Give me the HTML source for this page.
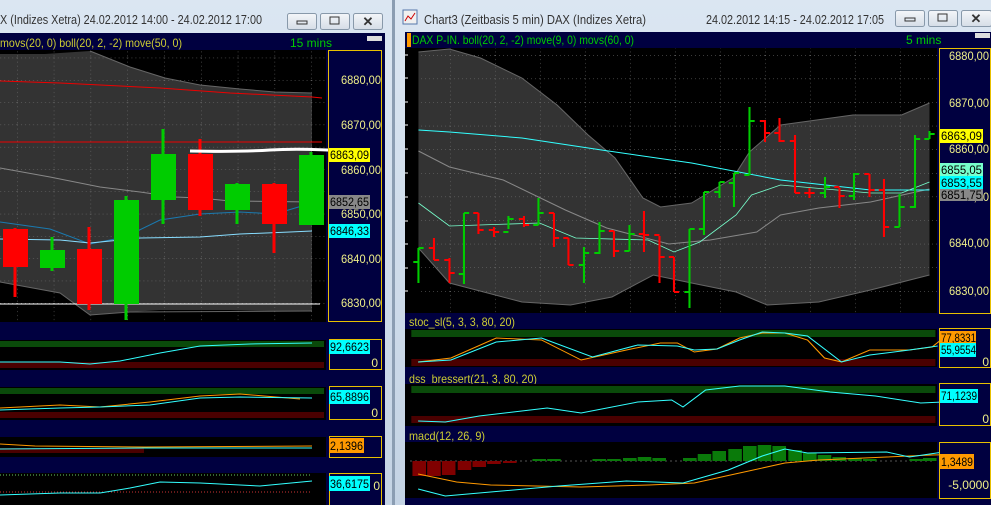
<!DOCTYPE html>
<html><head><meta charset="utf-8"><style>
html,body{margin:0;padding:0;width:991px;height:505px;overflow:hidden;background:#c8d6e5}
svg{display:block;font-family:"Liberation Sans",sans-serif}
</style></head><body>
<svg width="991" height="505" viewBox="0 0 991 505" xmlns="http://www.w3.org/2000/svg">
<defs>
<linearGradient id="tb" x1="0" y1="0" x2="0" y2="1"><stop offset="0" stop-color="#dbe6f2"/><stop offset="1" stop-color="#c4d3e4"/></linearGradient>
<linearGradient id="bt" x1="0" y1="0" x2="0" y2="1"><stop offset="0" stop-color="#f4f6f9"/><stop offset="1" stop-color="#d5dde7"/></linearGradient>
<pattern id="gridL" width="36.8" height="22.3" patternUnits="userSpaceOnUse" x="17" y="80"><path d="M0 0V22.3M0 0H36.8" stroke="#777" stroke-dasharray="1,3" fill="none"/></pattern>
<pattern id="gridR" width="45" height="23.6" patternUnits="userSpaceOnUse" x="450" y="55"><path d="M0 0V23.6M0 0H45" stroke="#777" stroke-dasharray="1,3" fill="none"/></pattern>
</defs>
<rect x="0" y="0" width="392" height="505" fill="url(#tb)"/>
<rect x="392" y="0" width="3" height="505" fill="#8b9db2"/>
<rect x="395" y="0" width="596" height="505" fill="url(#tb)"/>
<text x="0" y="24" font-size="12.5" fill="#333" textLength="262" lengthAdjust="spacingAndGlyphs">X (Indizes Xetra) 24.02.2012 14:00 - 24.02.2012 17:00</text>
<g stroke="#8899aa" fill="url(#bt)"><rect x="287.5" y="13.5" width="29" height="16" rx="2"/><rect x="320.5" y="13.5" width="29" height="16" rx="2"/><rect x="353.5" y="13.5" width="29" height="16" rx="2"/></g>
<rect x="297" y="21" width="10" height="3" fill="none" stroke="#333"/><rect x="330" y="17" width="9" height="7" fill="none" stroke="#333"/>
<text x="368" y="26" font-size="13" fill="#333" text-anchor="middle" font-weight="bold">✕</text>
<rect x="403" y="10" width="14" height="14" fill="#f0f0f0" stroke="#5577aa"/><path d="M405 21l3-5 3 3 4-6" stroke="#c00" fill="none"/>
<text x="424" y="24" font-size="12.5" fill="#333" textLength="222" lengthAdjust="spacingAndGlyphs">Chart3 (Zeitbasis 5 min)  DAX (Indizes Xetra)</text>
<text x="706" y="24" font-size="12.5" fill="#333" textLength="178" lengthAdjust="spacingAndGlyphs">24.02.2012 14:15 - 24.02.2012 17:05</text>
<g stroke="#8899aa" fill="url(#bt)"><rect x="895.5" y="10.5" width="29" height="16" rx="2"/><rect x="928.5" y="10.5" width="29" height="16" rx="2"/><rect x="961.5" y="10.5" width="30" height="16" rx="2"/></g>
<rect x="905" y="18" width="10" height="3" fill="none" stroke="#333"/><rect x="938" y="14" width="9" height="7" fill="none" stroke="#333"/>
<text x="976" y="23" font-size="13" fill="#333" text-anchor="middle" font-weight="bold">✕</text>

<!-- LEFT CHART -->
<rect x="0" y="33" width="385" height="472" fill="#000040"/>
<text x="0" y="47" font-size="12" fill="#cccc33" textLength="182" lengthAdjust="spacingAndGlyphs">movs(20, 0) boll(20, 2, -2) move(50, 0)</text>
<text x="290" y="47" font-size="12" fill="#00cc00">15 mins</text>
<rect x="367" y="36" width="15" height="5" fill="#ddd"/>
<rect x="0" y="50" width="326" height="272" fill="#000"/>
<polygon points="0,54 45,54 90,51 130,67 165,78 200,85 240,89 275,92 312,93 312,311 270,311 230,310 160,310 130,312 90,315 60,293 0,282" fill="#333"/>
<polyline points="90,51 130,67 165,78 200,85 240,89 275,92 312,93" stroke="#666" fill="none"/>
<polyline points="0,282 60,293 90,315 130,312 312,311" stroke="#666" fill="none"/>
<rect x="0" y="50" width="326" height="272" fill="url(#gridL)"/>
<polyline points="0,81 60,83 160,88 230,93 312,97 322,98" stroke="#e00" fill="none"/>
<line x1="0" y1="142" x2="322" y2="142" stroke="#e00"/>
<line x1="0" y1="304" x2="320" y2="304" stroke="#fff"/>
<polyline points="0,168 50,177 100,187 140,192 175,197 200,198 230,201 312,202" stroke="#888" fill="none"/>
<polyline points="0,222 50,229 90,244 125,237 160,220 200,214 240,212 275,214 312,203" stroke="#1a7ab0" fill="none"/>
<polyline points="0,239 60,240 90,243 140,238 200,237 240,234 290,232 312,231" stroke="#88ddff" fill="none"/>
<path d="M52 237V271M126 196V320M163 129V224M237 183V224M311 152V225" stroke="#0c0" stroke-width="3"/>
<path d="M15 228V297M89 227V310M200 139V216M274 183V253" stroke="#f00" stroke-width="3"/>
<g><rect x="3" y="229" width="25" height="38" fill="#f00"/><rect x="40" y="250" width="25" height="18" fill="#0c0"/><rect x="77" y="249" width="25" height="55" fill="#f00"/><rect x="114" y="200" width="25" height="104" fill="#0c0"/><rect x="151" y="154" width="25" height="46" fill="#0c0"/><rect x="188" y="154" width="25" height="56" fill="#f00"/><rect x="225" y="184" width="25" height="26" fill="#0c0"/><rect x="262" y="184" width="25" height="40" fill="#f00"/><rect x="299" y="155" width="25" height="70" fill="#0c0"/></g>
<path d="M190 151Q240 152 270 150T348 151" stroke="#fff" stroke-width="3" fill="none"/>
<rect x="328.5" y="50.5" width="53" height="271" fill="#000040" stroke="#e8c000"/>
<g font-size="12" fill="#eeee88"><text x="341" y="84" textLength="40" lengthAdjust="spacingAndGlyphs">6880,00</text><text x="341" y="129" textLength="40" lengthAdjust="spacingAndGlyphs">6870,00</text><text x="341" y="174" textLength="40" lengthAdjust="spacingAndGlyphs">6860,00</text><text x="341" y="218" textLength="40" lengthAdjust="spacingAndGlyphs">6850,00</text><text x="341" y="263" textLength="40" lengthAdjust="spacingAndGlyphs">6840,00</text><text x="341" y="307" textLength="40" lengthAdjust="spacingAndGlyphs">6830,00</text></g>
<g font-size="12" fill="#000">
<rect x="329" y="148" width="41" height="14" fill="#ffff00"/><text x="330" y="159" textLength="39" lengthAdjust="spacingAndGlyphs">6863,09</text>
<rect x="329" y="195" width="41" height="14" fill="#888"/><text x="330" y="206" textLength="39" lengthAdjust="spacingAndGlyphs">6852,65</text>
<rect x="329" y="224" width="41" height="14" fill="#00ffff"/><text x="330" y="235" textLength="39" lengthAdjust="spacingAndGlyphs">6846,33</text>
</g>
<rect x="0" y="340" width="326" height="30" fill="#000"/>
<rect x="0" y="341" width="324" height="6" fill="#0a4a0a"/><rect x="0" y="362" width="324" height="6" fill="#4a0000"/>
<polyline points="0,362 60,362 90,364 120,361 160,353 200,346 250,344 312,343" stroke="#33ffff" fill="none"/>
<rect x="329.5" y="339.5" width="52" height="30" fill="#000040" stroke="#e8c000"/>
<rect x="329" y="340" width="41" height="14" fill="#00ffff"/><text x="330" y="351" font-size="12" fill="#000" textLength="39" lengthAdjust="spacingAndGlyphs">92,6623</text><text x="378" y="367" font-size="12" fill="#eeee88" text-anchor="end">0</text>
<rect x="0" y="387" width="326" height="33" fill="#000"/>
<rect x="0" y="388" width="324" height="6" fill="#0a4a0a"/><rect x="0" y="412" width="324" height="6" fill="#4a0000"/>
<polyline points="0,408 60,405 100,407 150,402 200,396 240,394 300,399" stroke="#ff9900" fill="none"/>
<polyline points="0,410 60,408 100,407 150,405 200,398 240,397 312,398" stroke="#33ffff" fill="none"/>
<rect x="329.5" y="386.5" width="52" height="33" fill="#000040" stroke="#e8c000"/>
<rect x="329" y="390" width="41" height="14" fill="#00ffff"/><text x="330" y="401" font-size="12" fill="#000" textLength="39" lengthAdjust="spacingAndGlyphs">65,8896</text><text x="378" y="417" font-size="12" fill="#eeee88" text-anchor="end">0</text>
<rect x="0" y="437" width="326" height="20" fill="#000"/>
<rect x="0" y="448" width="144" height="5" fill="#4a0000"/>
<polyline points="0,444 35,446 145,447 312,446" stroke="#ff9900" fill="none"/>
<polyline points="0,449 145,448 312,448" stroke="#33ffff" fill="none"/>
<rect x="329.5" y="436.5" width="52" height="21" fill="#000040" stroke="#e8c000"/>
<rect x="329" y="438" width="35" height="15" fill="#ff9900"/><text x="330" y="450" font-size="12" fill="#000" textLength="33" lengthAdjust="spacingAndGlyphs">2,1396</text>
<rect x="0" y="473" width="326" height="32" fill="#000"/>
<line x1="0" y1="475" x2="312" y2="475" stroke="#6c6" stroke-dasharray="1,2"/><line x1="0" y1="492" x2="312" y2="492" stroke="#c33" stroke-dasharray="1,2"/>
<polyline points="0,495 60,493 100,493 130,488 160,482 200,483 260,486 312,481" stroke="#33ffff" fill="none"/>
<rect x="329.5" y="473.5" width="52" height="33" fill="#000040" stroke="#e8c000"/>
<rect x="329" y="476" width="41" height="15" fill="#00ffff"/><text x="330" y="488" font-size="12" fill="#000" textLength="39" lengthAdjust="spacingAndGlyphs">36,6175</text><text x="380" y="490" font-size="12" fill="#eeee88" text-anchor="end">0</text>

<!-- RIGHT CHART -->
<rect x="405" y="32" width="586" height="473" fill="#000040"/>
<rect x="407" y="33" width="4" height="14" fill="#ff9900"/>
<text x="412" y="44" font-size="12" fill="#00cc00" textLength="222" lengthAdjust="spacingAndGlyphs">DAX P-IN. boll(20, 2, -2) move(9, 0) movs(60, 0)</text>
<text x="906" y="44" font-size="12" fill="#00cc00">5 mins</text>
<rect x="975" y="33" width="15" height="5" fill="#ddd"/>
<rect x="405" y="48" width="13" height="265" fill="#000"/>
<path d="M405 55h3M405 78h3M405 102h3M405 125h3M405 149h3M405 173h3M405 197h3M405 221h3M405 244h3M405 268h3M405 291h3" stroke="#fff"/>
<rect x="418" y="48" width="519" height="265" fill="#000"/>
<g transform="translate(405,0) scale(1.0345,1) translate(-405,0)">
<polygon points="418,52 448,49 478,58 518,78 552,105 582,135 608,158 635,198 652,207 682,203 722,178 738,152 768,125 838,115 885,115 912,103 912,275 855,290 805,302 755,305 725,292 682,283 645,275 605,297 565,305 518,302 448,283 418,248" fill="#333"/>
<polyline points="418,52 448,49 478,58 518,78 552,105 582,135 608,158 635,198 652,207 682,203 722,178 738,152 768,125 838,115 885,115 912,103" stroke="#666" fill="none"/>
<polyline points="912,275 855,290 805,302 755,305 725,292 682,283 645,275 605,297 565,305 518,302 448,283 418,248" stroke="#666" fill="none"/>
</g>
<rect x="418" y="48" width="519" height="265" fill="url(#gridR)"/>
<g transform="translate(405,0) scale(1.0345,1) translate(-405,0)">
<polyline points="418,151 448,167 500,180 560,210 600,228 660,244 700,240 745,232 768,215 805,208 855,202 912,189" stroke="#888" fill="none"/>
<polyline points="418,130 448,132 518,138 595,150 682,163 768,180 855,190 912,190" stroke="#33ffff" fill="none"/>
<polyline points="418,203 448,226 535,223 570,238 640,240 665,252 690,242 725,215 740,195 768,185 855,193 885,193 912,182" stroke="#77ffcc" fill="none" stroke-width="0.8"/>
<g stroke-width="2" fill="none">
<path stroke="#0c0" d="M418 248V283M413 262H418M418 248H423
M462 213V284M457 274H462M462 213H467
M505 216V229M500 232H505M505 219H510
M534 198V225M529 225H534M534 213H539
M578 247V283M573 265H578M578 253H583
M593 222V254M588 253H593M593 231H598
M622 225V251M617 251H622M622 234H627
M680 229V308M675 292H680M680 229H685
M694 192V235M689 229H694M694 192H699
M709 182V198M704 192H709M709 182H714
M723 173V207M718 183H723M723 173H728
M738 107V175M733 175H738M738 121H743
M811 177V198M806 193H811M811 187H816
M839 173V200M834 196H839M839 174H844
M883 194V227M878 227H883M883 207H888
M898 135V208M893 207H898M898 139H903
M912 131V139M907 139H912M912 134H917"/>
<path stroke="#f00" d="M433 238V260M428 248H433M433 260H438
M448 258V283M443 260H448M448 273H453
M476 213V234M471 213H476M476 230H481
M491 227V237M486 230H491M491 232H496
M520 216V227M515 219H520M520 225H525
M549 213V247M544 213H549M549 238H554
M563 238V265M558 238H563M563 265H568
M607 231V257M602 231H607M607 251H612
M636 211V252M631 234H636M636 235H641
M651 236V283M646 235H651M651 257H656
M665 257V292M660 257H665M665 292H670
M753 120V142M748 121H753M753 133H758
M767 118V142M762 133H767M767 141H772
M782 135V193M777 141H782M782 193H787
M796 188V198M791 193H796M796 193H801
M825 188V208M820 187H825M825 196H830
M854 174V197M849 174H854M854 190H859
M868 179V237M863 190H868M868 227H873"/>
</g>
</g>
<rect x="939.5" y="48.5" width="51" height="265" fill="#000040" stroke="#e8c000"/>
<g font-size="12" fill="#eeee88"><text x="949" y="60" textLength="40" lengthAdjust="spacingAndGlyphs">6880,00</text><text x="949" y="107" textLength="40" lengthAdjust="spacingAndGlyphs">6870,00</text><text x="949" y="153" textLength="40" lengthAdjust="spacingAndGlyphs">6860,00</text><text x="949" y="201" textLength="40" lengthAdjust="spacingAndGlyphs">6850,00</text><text x="949" y="247" textLength="40" lengthAdjust="spacingAndGlyphs">6840,00</text><text x="949" y="295" textLength="40" lengthAdjust="spacingAndGlyphs">6830,00</text></g>
<g font-size="12" fill="#000">
<rect x="940" y="163" width="43" height="14" fill="#77ffcc"/><text x="941" y="174" textLength="41" lengthAdjust="spacingAndGlyphs">6855,05</text>
<rect x="940" y="176" width="43" height="14" fill="#00ffff"/><text x="941" y="187" textLength="41" lengthAdjust="spacingAndGlyphs">6853,55</text>
<rect x="940" y="189" width="43" height="12" fill="#888"/><text x="941" y="199" textLength="41" lengthAdjust="spacingAndGlyphs">6851,75</text>
<rect x="940" y="129" width="43" height="14" fill="#ffff00"/><text x="941" y="140" textLength="41" lengthAdjust="spacingAndGlyphs">6863,09</text>
</g>
<!-- indicators -->
<text x="409" y="326" font-size="12" fill="#cccc33" textLength="106" lengthAdjust="spacingAndGlyphs">stoc_sl(5, 3, 3, 80, 20)</text>
<rect x="405" y="329" width="532" height="38" fill="#000"/>
<text x="409" y="383" font-size="12" fill="#cccc33" textLength="128" lengthAdjust="spacingAndGlyphs">dss_bressert(21, 3, 80, 20)</text>
<rect x="405" y="384" width="532" height="42" fill="#000"/>
<text x="409" y="440" font-size="12" fill="#cccc33" textLength="76" lengthAdjust="spacingAndGlyphs">macd(12, 26, 9)</text>
<rect x="405" y="442" width="532" height="56" fill="#000"/>
<line x1="410" y1="461" x2="935" y2="461" stroke="#555" stroke-dasharray="2,3"/>
<g transform="translate(400,0) scale(1.132,1) translate(-400,0)">
<rect x="410" y="330" width="463" height="7" fill="#0a4a0a"/><rect x="410" y="359" width="463" height="7" fill="#4a0000"/>
<polyline points="416,362 445,358 485,338 525,340 560,360 600,350 630,343 645,343 660,352 680,349 700,338 720,333 740,333 760,340 775,358 790,362 815,350 850,350 870,347 880,338" stroke="#ff9900" fill="none"/>
<polyline points="416,362 445,360 485,342 525,338 570,357 610,345 645,346 660,350 680,349 700,340 720,332 740,333 760,336 790,362 815,355 850,350 875,346" stroke="#33ffff" fill="none"/>
<rect x="410" y="386" width="463" height="7" fill="#0a4a0a"/><rect x="410" y="416" width="463" height="7" fill="#4a0000"/>
<polyline points="416,421 440,422 470,416 530,408 560,413 610,402 640,400 650,407 670,390 700,386 740,386 780,392 820,396 860,403 880,402 910,398" stroke="#33ffff" fill="none"/>
<g fill="#800000"><rect x="411" y="461" width="12" height="15"/><rect x="424" y="461" width="12" height="15"/><rect x="437" y="461" width="12" height="14"/><rect x="451" y="461" width="12" height="9"/><rect x="464" y="461" width="12" height="6"/><rect x="477" y="461" width="12" height="3"/><rect x="491" y="461" width="12" height="2"/></g>
<g fill="#0a7a0a"><rect x="517" y="459" width="12" height="2"/><rect x="530" y="459" width="12" height="2"/><rect x="570" y="459" width="12" height="2"/><rect x="583" y="459" width="12" height="2"/><rect x="597" y="458" width="12" height="3"/><rect x="610" y="457" width="12" height="4"/><rect x="623" y="458" width="12" height="3"/><rect x="650" y="458" width="12" height="3"/><rect x="663" y="454" width="12" height="7"/><rect x="676" y="451" width="12" height="10"/><rect x="690" y="449" width="12" height="12"/><rect x="703" y="446" width="12" height="15"/><rect x="716" y="445" width="12" height="16"/><rect x="729" y="446" width="12" height="15"/><rect x="743" y="450" width="12" height="11"/><rect x="756" y="453" width="12" height="8"/><rect x="769" y="455" width="12" height="6"/><rect x="782" y="457" width="12" height="4"/><rect x="796" y="458" width="12" height="3"/><rect x="809" y="459" width="12" height="2"/><rect x="850" y="459" width="12" height="2"/><rect x="862" y="458" width="12" height="3"/></g>
<polyline points="416,474 450,482 480,485 560,487 620,485 660,483 700,473 740,463 770,460 830,457 870,455 910,454" stroke="#ff9900" fill="none"/>
<polyline points="416,489 440,496 480,492 540,486 600,481 650,483 690,470 720,456 740,449 760,453 830,452 850,457 880,452 910,450" stroke="#33ffff" fill="none"/>
</g>
<rect x="939.5" y="328.5" width="51" height="39" fill="#000040" stroke="#e8c000"/>
<rect x="940" y="331" width="36" height="14" fill="#ff9900"/><text x="941" y="342" font-size="12" fill="#000" textLength="35" lengthAdjust="spacingAndGlyphs">77,8331</text>
<rect x="940" y="343" width="36" height="14" fill="#00ffff"/><text x="941" y="354" font-size="12" fill="#000" textLength="35" lengthAdjust="spacingAndGlyphs">55,9554</text>
<text x="989" y="366" font-size="12" fill="#eeee88" text-anchor="end">0</text>
<rect x="939.5" y="383.5" width="51" height="42" fill="#000040" stroke="#e8c000"/>
<rect x="940" y="389" width="38" height="14" fill="#00ffff"/><text x="941" y="400" font-size="12" fill="#000" textLength="36" lengthAdjust="spacingAndGlyphs">71,1239</text>
<text x="989" y="423" font-size="12" fill="#eeee88" text-anchor="end">0</text>
<rect x="939.5" y="442.5" width="51" height="56" fill="#000040" stroke="#e8c000"/>
<rect x="940" y="454" width="34" height="15" fill="#ff9900"/><text x="941" y="466" font-size="12" fill="#000" textLength="32" lengthAdjust="spacingAndGlyphs">1,3489</text>
<text x="989" y="489" font-size="12" fill="#eeee88" text-anchor="end">-5,0000</text>
</svg>
</body></html>
